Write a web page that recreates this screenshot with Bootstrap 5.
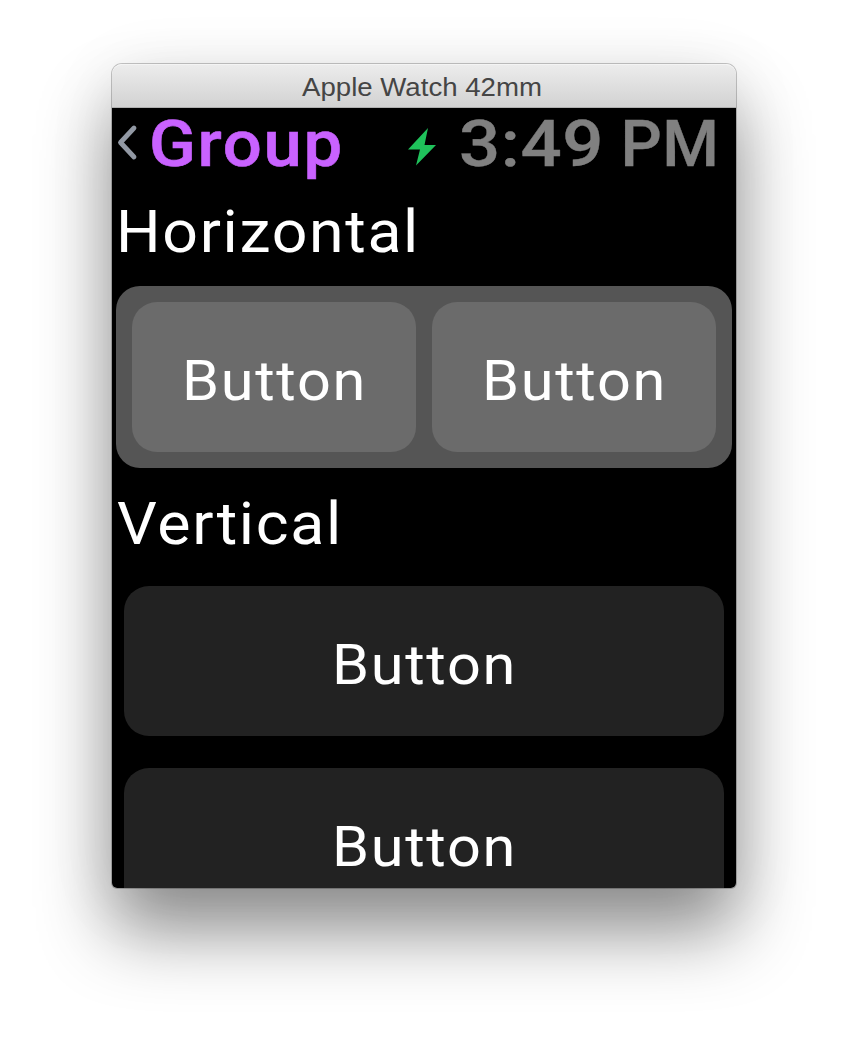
<!DOCTYPE html>
<html lang="en">
<head>
<meta charset="utf-8">
<title>Apple Watch 42mm</title>
<link rel="stylesheet" href="https://cdn.jsdelivr.net/npm/bootstrap@5.3.0/dist/css/bootstrap.min.css">
<style>
body{background:#fff;font-family:Roboto,"Liberation Sans",sans-serif;height:1048px;overflow:hidden}
.sim-window{width:624px;height:824px;margin:64px 0 0 112px;border-radius:10px 10px 5px 5px;box-shadow:0 0 0 1px rgba(0,0,0,.22),0 44px 72px rgba(0,0,0,.43),0 10px 70px rgba(0,0,0,.08)}
.title-bar{height:44px;background:linear-gradient(#ececec,#d2d2d2);border-top:1px solid #f4f4f4;border-bottom:1px solid #b0b0b0;color:#454545;font-family:"Liberation Sans",sans-serif;border-radius:10px 10px 0 0}
.screen{height:780px;color:#fff;background:#000;border-radius:0 0 5px 5px}
.status{height:72px}
.status svg,.fit{display:block;overflow:visible}
.fit{width:100%}
.group-h{height:182px;margin:0 4px;padding:16px;gap:16px;background:#555;border-radius:24px}
.watch-btn{border:0;padding:0;color:#fff;border-radius:25px;height:150px;background:#222}
.group-h .watch-btn{background:#6b6b6b}
.stack{gap:32px;min-height:0;align-content:start}
text{fill:currentColor;letter-spacing:1.6px}
.title-bar text{letter-spacing:0}
.accent{fill:#c962ff}
.clock{fill:#808080;letter-spacing:.5px}
</style>
</head>
<body>
<main class="sim-window">
<div class="title-bar"><svg class="fit" height="42" viewBox="0 0 624 42"><text x="190" y="31" textLength="240" lengthAdjust="spacingAndGlyphs" font-size="26.5">Apple Watch 42mm</text></svg></div>
<div class="screen d-flex flex-column">
<header class="status flex-shrink-0"><svg width="624" height="72" viewBox="0 0 624 72" font-weight="500" font-size="64.5">
<path d="M22 20 8.5 34.5 22 49" fill="none" stroke="#9299a4" stroke-width="4.8" stroke-linecap="round" stroke-linejoin="round"/>
<text class="accent" x="37" y="57.5" textLength="195" lengthAdjust="spacingAndGlyphs" stroke="#c962ff" stroke-width=".6">Group</text>
<path d="M316 20 296 41.5h12l-4 16L324 37h-11.5z" fill="#1fc25b"/>
<g stroke="#808080" stroke-width=".4">
<text class="clock" x="347" y="57.5" textLength="145" lengthAdjust="spacingAndGlyphs">3:49</text>
<text class="clock" x="508.5" y="57.5" textLength="99" lengthAdjust="spacingAndGlyphs">PM</text></g></svg></header>
<svg class="fit flex-shrink-0" height="106" viewBox="0 0 624 106"><text x="4" y="72" font-size="59.5" textLength="304" lengthAdjust="spacingAndGlyphs">Horizontal</text></svg>
<section class="group-h d-flex flex-shrink-0">
<button class="watch-btn flex-fill"><svg class="fit" height="150" viewBox="0 0 284 150"><text x="50" y="98" font-size="56" textLength="185" lengthAdjust="spacingAndGlyphs">Button</text></svg></button>
<button class="watch-btn flex-fill"><svg class="fit" height="150" viewBox="0 0 284 150"><text x="50" y="98" font-size="56" textLength="185" lengthAdjust="spacingAndGlyphs">Button</text></svg></button>
</section>
<svg class="fit flex-shrink-0" height="118" viewBox="0 0 624 118"><text x="5" y="76" font-size="59.5" textLength="226" lengthAdjust="spacingAndGlyphs">Vertical</text></svg>
<section class="stack d-grid px-2 mx-1 flex-grow-1 overflow-hidden">
<button class="watch-btn"><svg class="fit" height="150" viewBox="0 0 600 150"><text x="208" y="98" font-size="56" textLength="185" lengthAdjust="spacingAndGlyphs">Button</text></svg></button>
<button class="watch-btn"><svg class="fit" height="150" viewBox="0 0 600 150"><text x="208" y="98" font-size="56" textLength="185" lengthAdjust="spacingAndGlyphs">Button</text></svg></button>
</section>
</div></main>
<script src="https://cdn.jsdelivr.net/npm/bootstrap@5.3.0/dist/js/bootstrap.bundle.min.js"></script>
</body></html>
